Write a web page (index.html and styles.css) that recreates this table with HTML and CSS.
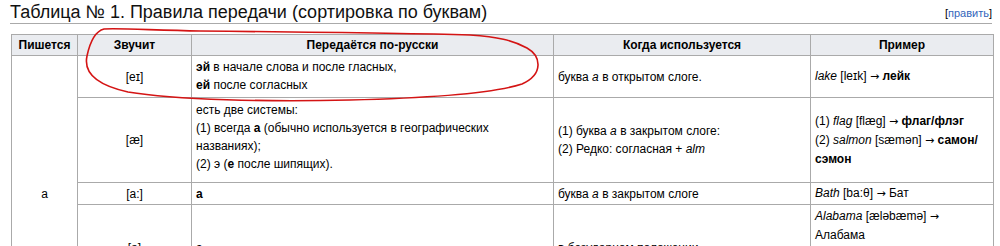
FILE: index.html
```html
<!DOCTYPE html>
<html lang="ru">
<head>
<meta charset="utf-8">
<link rel="stylesheet" href="styles.css">
</head>
<body>
<div class="page">
  <div class="heading">
    <h2 class="title">Таблица № 1. Правила передачи (сортировка по буквам)</h2>
    <span class="edit">[<a href="#">править</a>]</span>
  </div>
  <table class="rules">
    <colgroup>
      <col class="c1"><col class="c2"><col class="c3"><col class="c4"><col class="c5">
    </colgroup>
    <thead>
      <tr class="hrow">
        <th>Пишется</th><th>Звучит</th><th>Передаётся по-русски</th><th>Когда используется</th><th>Пример</th>
      </tr>
    </thead>
    <tbody>
      <tr class="r1">
        <td class="letter" rowspan="5">a</td>
        <td class="snd">[eɪ]</td>
        <td class="top"><b>эй</b> в начале слова и после гласных,<br><b>ей</b> после согласных</td>
        <td>буква <i>a</i> в открытом слоге.</td>
        <td><i>lake</i> [leɪk] <span class="arr">→</span> <b>лейк</b></td>
      </tr>
      <tr class="r2">
        <td class="snd">[æ]</td>
        <td class="r2text">есть две системы:<br>(1) всегда <b>а</b> (обычно используется в географических названиях);<br>(2) э (<b>е</b> после шипящих).</td>
        <td>(1) буква <i>a</i> в закрытом слоге:<br>(2) Редко: согласная + <i>alm</i></td>
        <td>(1) <i>flag</i> [flæg] <span class="arr">→</span> <b>флаг/флэг</b><br>(2) <i>salmon</i> [sæmən] <span class="arr">→</span> <b>самон/ сэмон</b></td>
      </tr>
      <tr class="r3">
        <td class="snd">[a:]</td>
        <td><b>а</b></td>
        <td>буква <i>a</i> в закрытом слоге</td>
        <td><i>Bath</i> [ba:θ] <span class="arr">→</span> Бат</td>
      </tr>
      <tr class="r4">
        <td class="snd">[ə]</td>
        <td><b>а</b></td>
        <td>в безударном положении</td>
        <td class="top"><i>Alabama</i> [æləbæmə] <span class="arr">→</span> Алабама</td>
      </tr>
      <tr class="r5">
        <td class="snd"></td><td></td><td></td><td></td>
      </tr>
    </tbody>
  </table>
  <svg class="scribble" width="1000" height="246" viewBox="0 0 1000 246" aria-hidden="true">
    <path d="M 104 29 C 96 31 90 42 87 56 C 84 70 92 84 128 92 C 175 100 270 102 350 100 C 430 98 495 93 522 84 C 544 74 541 56 527 48 C 512 40 498 37 470 35 C 400 33 300 32 200 31 C 150 30 118 28 104 29"
      fill="none" stroke="#d41414" stroke-width="1.6" stroke-linecap="round"/>
  </svg>
</div>
</body>
</html>
```

FILE: styles.css
```css
html, body {
  margin: 0;
  padding: 0;
  background: #fff;
}
body {
  font-family: "Liberation Sans", Arial, sans-serif;
  color: #000;
  overflow: hidden;
}
.page {
  position: relative;
  width: 982px;
  padding: 0 0 0 10px;
}
.heading {
  display: flex;
  justify-content: space-between;
  align-items: flex-end;
  border-bottom: 1px solid #aaa;
  height: 23px;
  margin-bottom: 10px;
}
.title {
  margin: 0;
  font-size: 18px;
  font-weight: normal;
  line-height: 22px;
  margin-top: 1px;
  align-self: flex-start;
  color: #111;
}
.edit {
  font-size: 11px;
  line-height: 14px;
  align-self: flex-start;
  margin-top: 6px;
}
.edit a {
  color: #3366bb;
  text-decoration: none;
}
.rules {
  margin-left: 1px;
  border-collapse: collapse;
  table-layout: fixed;
  width: 982px;
  font-size: 12px;
  line-height: 18px;
}
.c1 { width: 66px; }
.c2 { width: 114px; }
.c3 { width: 362px; }
.c4 { width: 257px; }
.c5 { width: 183px; }
.rules th, .rules td {
  border: 1px solid #aaa;
  padding: 1px 4px;
  vertical-align: middle;
  text-align: left;
}
.rules th {
  background: #eaecf0;
  text-align: center;
  font-weight: bold;
  height: 18px;
}
.rules td.letter, .rules td.snd {
  text-align: center;
}
.rules td.r2text {
  padding-bottom: 8px;
}
.arr {
  font-family: "DejaVu Sans", sans-serif;
  font-size: 11px;
}
.r1 { height: 42px; }
.r2 { height: 85px; }
.r3 { height: 20px; }
.r4 { height: 86px; }
.r5 { height: 41px; }
.rules td.top {
  vertical-align: top;
  padding-top: 2px;
}
.scribble {
  position: absolute;
  left: 0;
  top: 0;
  pointer-events: none;
}
```
